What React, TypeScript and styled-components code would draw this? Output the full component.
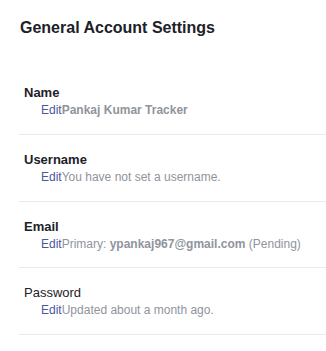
import React from "react";
import styled, { createGlobalStyle } from "styled-components";

const GlobalStyle = createGlobalStyle`
  html, body {
    margin: 0;
    padding: 0;
    background: #ffffff;
  }
  body {
    font-family: "Liberation Sans", Arial, sans-serif;
  }
`;

const Page = styled.div`
  width: 326px;
  padding-left: 19px;
  box-sizing: border-box;
`;

const Title = styled.h2`
  margin: 18px 0 30.33px 1px;
  font-size: 16px;
  line-height: 20px;
  font-weight: bold;
  color: #1d2129;
`;

const List = styled.ul`
  list-style: none;
  margin: 0;
  padding: 0;
`;

const Row = styled.li`
  display: flex;
  flex-direction: column;
  padding: 17px 0 16.67px 5px;
  border-bottom: 1px solid #e9ebee;
`;

const Label = styled.div<{ $light?: boolean }>`
  font-size: 13px;
  line-height: 15px;
  font-weight: ${(p) => (p.$light ? "normal" : "bold")};
  color: #1d2129;
`;

const Detail = styled.div`
  margin-top: 3px;
  padding-left: 17px;
  font-size: 12px;
  line-height: 14px;
  color: #90949c;
  white-space: nowrap;
`;

const EditLink = styled.a`
  color: #4b56a0;
  text-decoration: none;
  cursor: pointer;
`;

const Strong = styled.strong`
  font-weight: bold;
`;

export default function App() {
  return (
    <>
      <GlobalStyle />
      <Page>
        <Title>General Account Settings</Title>
        <List>
          <Row>
            <Label>Name</Label>
            <Detail>
              <EditLink>Edit</EditLink>
              <Strong>Pankaj Kumar Tracker</Strong>
            </Detail>
          </Row>
          <Row>
            <Label>Username</Label>
            <Detail>
              <EditLink>Edit</EditLink>You have not set a username.
            </Detail>
          </Row>
          <Row>
            <Label>Email</Label>
            <Detail>
              <EditLink>Edit</EditLink>Primary: <Strong>ypankaj967@gmail.com</Strong> (Pending)
            </Detail>
          </Row>
          <Row>
            <Label $light>Password</Label>
            <Detail>
              <EditLink>Edit</EditLink>Updated about a month ago.
            </Detail>
          </Row>
        </List>
      </Page>
    </>
  );
}
